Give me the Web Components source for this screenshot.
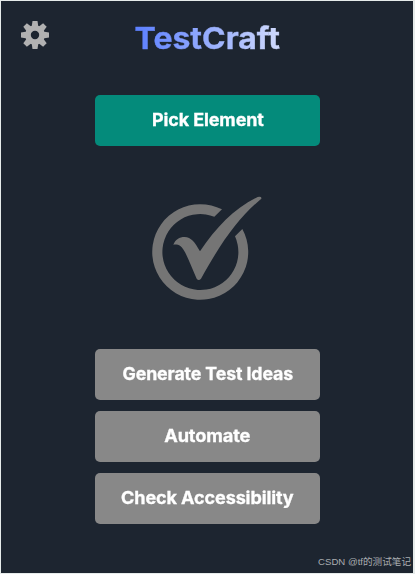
<!DOCTYPE html>
<html lang="en">
<head>
<meta charset="UTF-8">
<title>TestCraft</title>
<style>
    html, body { margin: 0; height: 100%; background: #e6ebea; }
    body { font-family: Inter, "Liberation Sans", sans-serif; }
</style>
</head>
<body>
<craft-popup>
    <craft-header slot="header">TestCraft</craft-header>
    <craft-button variant="primary" style="--stretch: 1.055">Pick Element</craft-button>
    <craft-logo></craft-logo>
    <craft-button style="--stretch: 1.043">Generate Test Ideas</craft-button>
    <craft-button style="--stretch: 1.07">Automate</craft-button>
    <craft-button style="--stretch: 1.06">Check Accessibility</craft-button>
    <span slot="credit">CSDN @tf的测试笔记</span>
</craft-popup>

<script>
class CraftPopup extends HTMLElement {
    constructor() {
        super();
        this.attachShadow({ mode: 'open' }).innerHTML = `
        <style>
            :host {
                display: block;
                position: relative;
                box-sizing: border-box;
                width: 412px;
                height: 572px;
                margin: 0 auto 0 1px;
                transform: translateY(1px);
                background: #1d2530;
            }
            main {
                display: flex;
                flex-direction: column;
                align-items: center;
                gap: 11px;
                padding-top: 19px;
                padding-left: 1px;
            }
            ::slotted([slot="credit"]) {
                position: absolute;
                right: 2px;
                bottom: 3px;
                font: 9.6px/16px "Liberation Sans", "Noto Sans CJK SC", sans-serif;
                color: #a9adb1;
                white-space: nowrap;
            }
        </style>
        <slot name="header"></slot>
        <main><slot></slot></main>
        <slot name="credit"></slot>
        `;
    }
}

class CraftHeader extends HTMLElement {
    constructor() {
        super();
        this.attachShadow({ mode: 'open' }).innerHTML = `
        <style>
            :host {
                display: grid;
                grid-template-columns: 28px 1fr 28px;
                align-items: center;
                height: 75px;
                padding: 0 19px 0 20px;
                box-sizing: border-box;
            }
            svg { display: block; width: 28px; height: 28px; margin-bottom: 7px; }
            h1 {
                justify-self: center;
                margin: 0 1px 1px 0;
                font-size: 30px;
                line-height: 40px;
                font-weight: 700;
                transform: scaleX(1.065);
                background: linear-gradient(90deg, #5b7fff, #d0dafc);
                -webkit-background-clip: text;
                background-clip: text;
                color: transparent;
                -webkit-text-stroke: 0.4px transparent;
            }
        </style>
        <svg viewBox="-14 -14 28 28" fill="#b1b1b1">
            <defs><path id="tooth" d="M-3.4 -8L-2.5 -14H2.5L3.4 -8Z" /></defs>
            <path fill-rule="evenodd" d="M0 -9.8A9.8 9.8 0 1 1 0 9.8A9.8 9.8 0 1 1 0 -9.8ZM0 -4.2A4.2 4.2 0 1 0 0 4.2A4.2 4.2 0 1 0 0 -4.2Z" />
            ${[0, 45, 90, 135, 180, 225, 270, 315].map(a => `<use href="#tooth" transform="rotate(${a})" />`).join('')}
        </svg>
        <h1><slot></slot></h1>
        `;
    }
}

class CraftButton extends HTMLElement {
    constructor() {
        super();
        this.attachShadow({ mode: 'open' }).innerHTML = `
        <style>
            :host { display: block; width: 225px; height: 51px; }
            button {
                width: 100%;
                height: 100%;
                padding: 0 0 1px;
                border: 0;
                border-radius: 5px;
                background: #888;
                color: #fff;
                font: 700 17px/24px Inter, sans-serif;
                letter-spacing: -0.1px;
            }
            span {
                display: inline-block;
                transform: scaleX(var(--stretch, 1));
                -webkit-text-stroke: 0.3px #fff;
            }
            :host([variant="primary"]) button { background: #048b7b; }
        </style>
        <button type="button"><span><slot></slot></span></button>
        `;
    }
}

class CraftLogo extends HTMLElement {
    constructor() {
        super();
        this.attachShadow({ mode: 'open' }).innerHTML = `
        <style>
            :host { display: block; width: 135px; height: 125px; margin: 28px 0 28px; }
            svg { display: block; width: 135px; height: 125px; }
        </style>
        <svg viewBox="0 0 405 375" fill="#757575">
            <path d="M246 73A144 143.500 0 1 0 307 132L285 154A114 114 0 1 1 223 95Z" />
            <path d="M100 179C106 164 118 156 134 156C153 156 165 172 180 199C228 127 285 68 353 36Q366 34 364 41C300 95 250 160 183 281Q176 289 170 281C150 235 135 193 121 183C115 179 108 178 100 179Z" />
        </svg>
        `;
    }
}

customElements.define('craft-popup', CraftPopup);
customElements.define('craft-header', CraftHeader);
customElements.define('craft-button', CraftButton);
customElements.define('craft-logo', CraftLogo);
</script>
</body>
</html>
